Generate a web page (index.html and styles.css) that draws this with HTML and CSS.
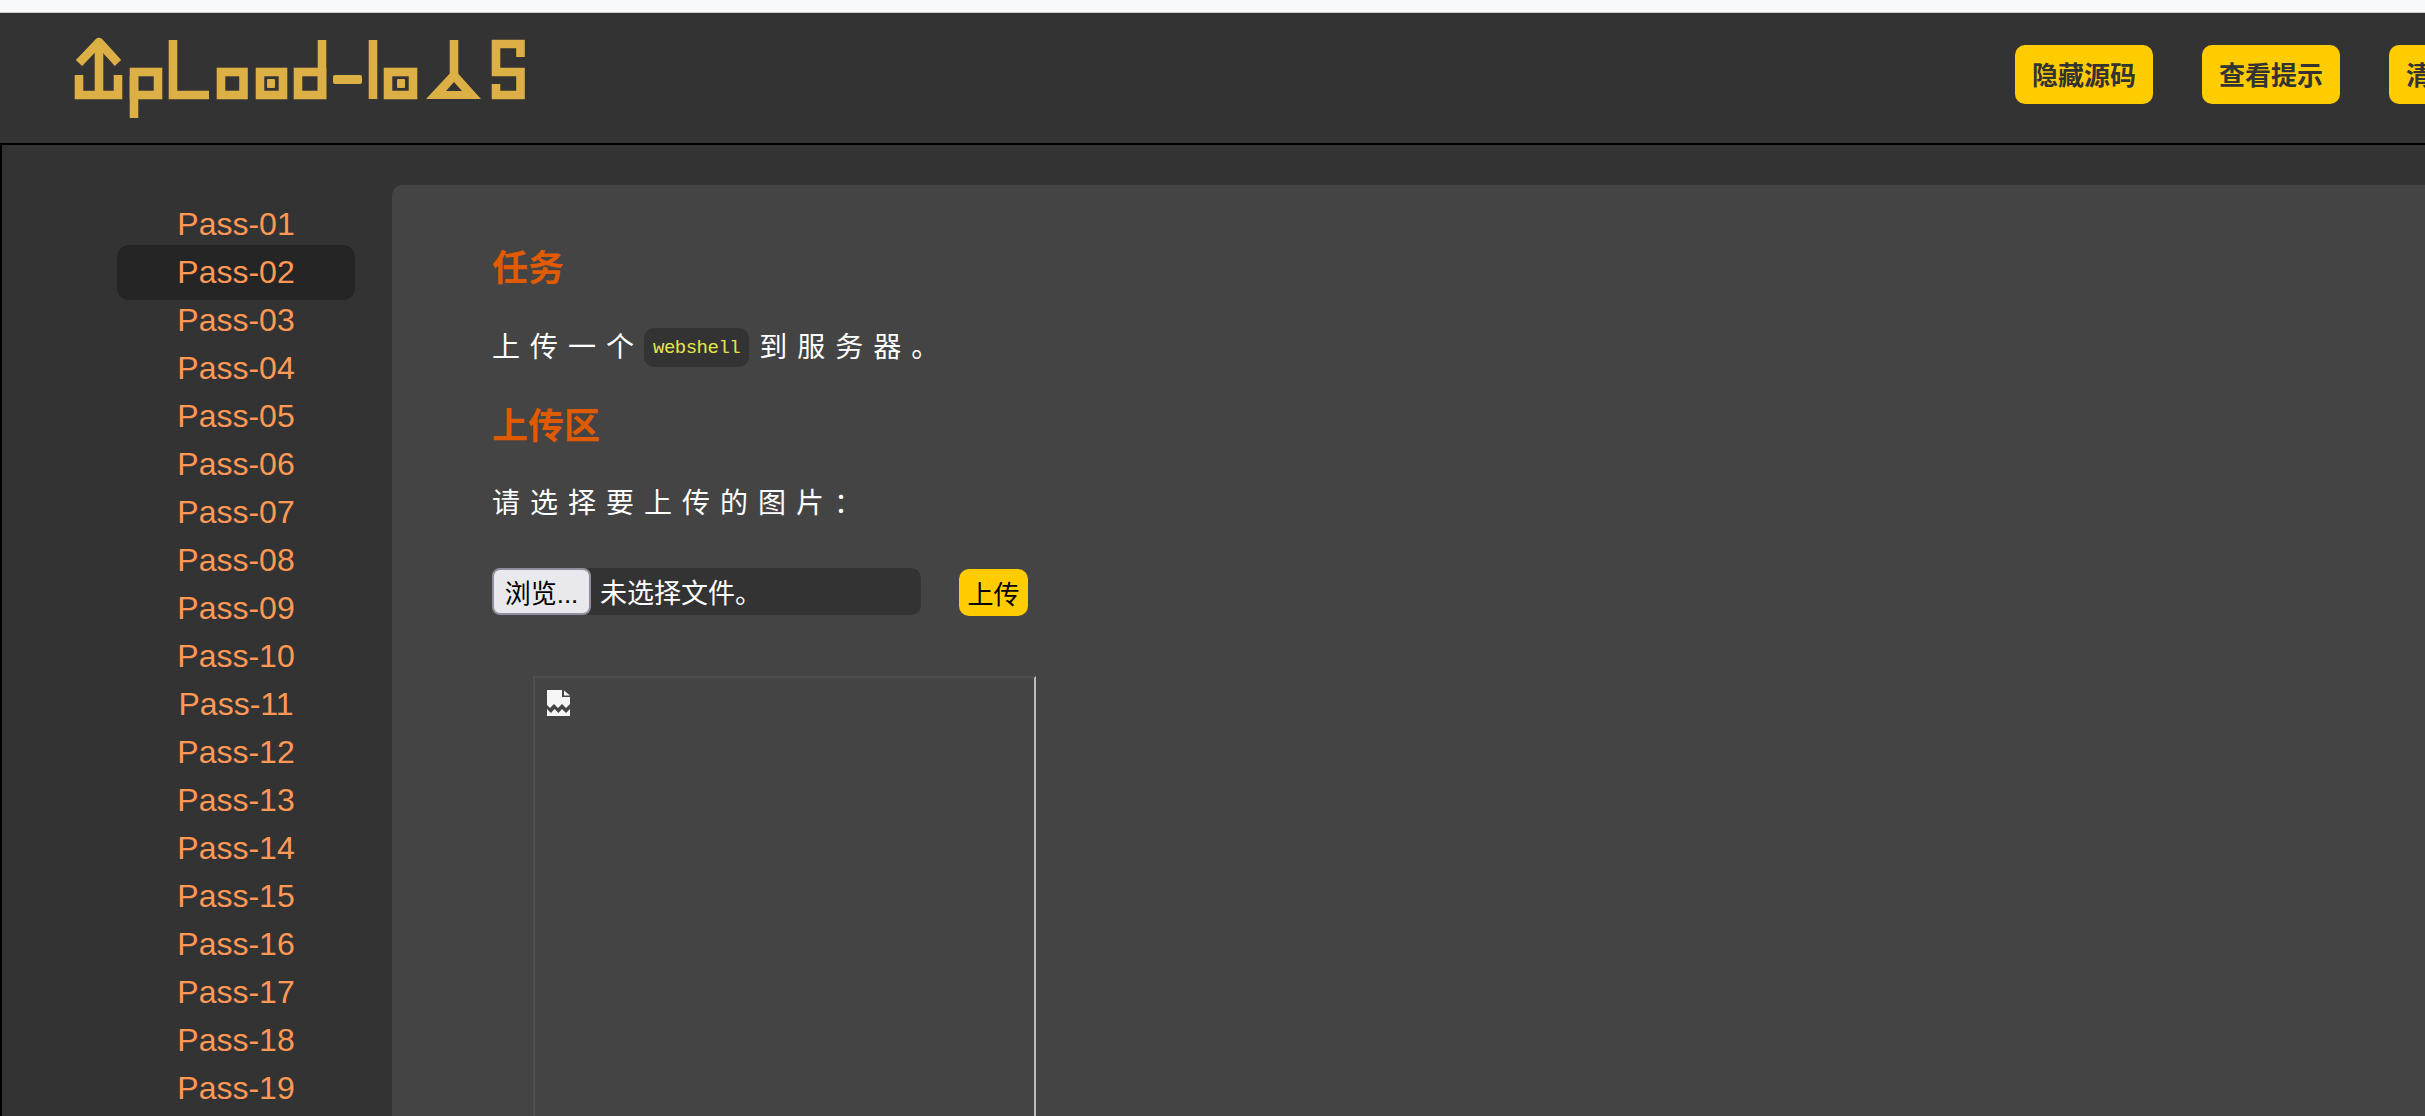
FILE: index.html
```html
<!DOCTYPE html>
<html>
<head>
  <meta charset="utf-8">
  <meta name="viewport" content="width=device-width, initial-scale=1">
  <title>upload-labs</title>
  <link rel="stylesheet" href="styles.css">
</head>
<body>
  <div class="topstrip"></div>
  <div class="header">
    <svg class="logo" width="460" height="90" viewBox="0 0 460 90" role="img" aria-label="upload-labs">
      <!-- arrow u -->
      <path class="logo-line" d="M9 39V59H48V39"/>
      <path class="logo-line" d="M29 5V59"/>
      <path class="logo-line logo-round" d="M9 27L29 6L48 27"/>
      <!-- p -->
      <rect class="logo-line" x="64" y="36" width="24" height="23"/>
      <path class="logo-line" d="M64 40V82"/>
      <!-- l -->
      <path class="logo-line" d="M103 4V59H139"/>
      <!-- o -->
      <rect class="logo-line" x="151" y="36" width="22.5" height="23"/>
      <!-- a -->
      <rect class="logo-line" x="190" y="36" width="23" height="23"/>
      <rect class="logo-fill" x="197" y="43" width="8" height="9" rx="1"/>
      <!-- d -->
      <rect class="logo-line" x="228" y="36" width="24" height="23"/>
      <path class="logo-line" d="M252 4V63"/>
      <!-- dash -->
      <rect class="logo-fill" x="263" y="39" width="29" height="9" rx="2"/>
      <!-- l -->
      <path class="logo-line" d="M303 4V63"/>
      <!-- a -->
      <rect class="logo-line" x="318" y="36" width="25" height="23"/>
      <rect class="logo-fill" x="327" y="43" width="8" height="9" rx="1"/>
      <!-- b -->
      <path class="logo-line" d="M384 4V45"/>
      <path class="logo-fill" fill-rule="evenodd" d="M384 33L411 63H356ZM384 46L376 55H392Z"/>
      <!-- s -->
      <path class="logo-line" d="M450.5 21V8H426V36H450.5V59H426V48"/>
    </svg>
    <div class="nav">
      <button class="nav-btn">隐藏源码</button>
      <button class="nav-btn">查看提示</button>
      <button class="nav-btn">清空上传文件</button>
    </div>
  </div>
  <div class="main">
    <ul class="menu">
      <li><a>Pass-01</a></li>
      <li><a class="active">Pass-02</a></li>
      <li><a>Pass-03</a></li>
      <li><a>Pass-04</a></li>
      <li><a>Pass-05</a></li>
      <li><a>Pass-06</a></li>
      <li><a>Pass-07</a></li>
      <li><a>Pass-08</a></li>
      <li><a>Pass-09</a></li>
      <li><a>Pass-10</a></li>
      <li><a>Pass-11</a></li>
      <li><a>Pass-12</a></li>
      <li><a>Pass-13</a></li>
      <li><a>Pass-14</a></li>
      <li><a>Pass-15</a></li>
      <li><a>Pass-16</a></li>
      <li><a>Pass-17</a></li>
      <li><a>Pass-18</a></li>
      <li><a>Pass-19</a></li>
    </ul>
    <div class="content">
      <h2>任务</h2>
      <p class="task">上传一个<code>webshell</code>到服务器。</p>
      <h2>上传区</h2>
      <p class="pick">请选择要上传的图片：</p>
      <div class="upload">
        <div class="file">
          <button class="file-btn">浏览...</button>
          <span class="file-name">未选择文件。</span>
        </div>
        <button class="submit">上传</button>
      </div>
      <div class="preview">
        <svg class="broken" width="25" height="28" viewBox="0 0 25 28">
          <path d="M1 1H16V8H24V15L20 19L16 15L12 19L8 15L4 19L1 16Z"/>
          <path d="M18 1.5L24 6.5H18Z"/>
          <path d="M1 27V20L5 24L8.5 20L12.5 24L16 20L20 24L24 20V27Z"/>
        </svg>
      </div>
    </div>
  </div>
</body>
</html>
```

FILE: styles.css
```css
* {
  margin: 0;
  padding: 0;
  box-sizing: border-box;
}

html, body {
  height: 100%;
  overflow: hidden;
}

body {
  display: flex;
  flex-direction: column;
  background: #333;
  color: #fff;
  font-family: "Liberation Sans", "Noto Sans CJK SC", sans-serif;
}

button {
  font-family: inherit;
  border: none;
}

.topstrip {
  flex: none;
  height: 13px;
  background: #f8f9fb;
  border-bottom: 1px solid #ccc;
}

/* header */
.header {
  flex: none;
  display: flex;
  align-items: flex-start;
  height: 132px;
  padding: 23px 0 0 70px;
  border-bottom: 2px solid #000;
}

.logo {
  flex: none;
  display: block;
}

.logo-line {
  fill: none;
  stroke: #dcb044;
  stroke-width: 8.6;
}

.logo-round {
  stroke-linejoin: round;
}

.logo-fill {
  fill: #dcb044;
}

.nav {
  flex: none;
  display: flex;
  gap: 49px;
  margin: 9px 0 0 1485px;
}

.nav-btn {
  flex: none;
  height: 59px;
  padding: 0 17px 3px;
  background: #fc0;
  color: #333;
  font-size: 26px;
  font-weight: bold;
  border-radius: 10px;
}

/* body */
.main {
  flex: 1;
  display: flex;
  min-height: 0;
  border-left: 2px solid #000;
  padding-top: 40px;
}

.menu {
  flex: none;
  width: 390px;
  padding: 15px 0 0 115px;
  list-style: none;
}

.menu li {
  display: flex;
  align-items: center;
  height: 48px;
}

.menu a {
  flex: none;
  width: 238px;
  height: 55px;
  line-height: 55px;
  text-align: center;
  font-size: 32px;
  color: #f95;
  border-radius: 12px;
}

.menu a.active {
  background: #252525;
}

.content {
  flex: 1;
  display: flex;
  flex-direction: column;
  padding: 59px 0 0 100px;
  background: #444;
  border-top-left-radius: 10px;
}

h2 {
  height: 50px;
  line-height: 50px;
  font-size: 36px;
  color: #e05a00;
}

.task, .pick {
  height: 40px;
  line-height: 40px;
  font-size: 28px;
  letter-spacing: 10px;
}

.task {
  margin: 34px 0;
}

.pick {
  margin: 32px 0 44px;
}

code {
  display: inline-block;
  height: 39px;
  line-height: 41px;
  margin-right: 10px;
  padding: 0 9px;
  background: #333;
  color: #e6e64c;
  font-family: "Liberation Mono", monospace;
  font-size: 19px;
  letter-spacing: -0.5px;
  border-radius: 10px;
  vertical-align: top;
}

/* upload form */
.upload {
  display: flex;
  align-items: flex-start;
  gap: 38px;
  font-size: 26px;
}

.file {
  display: flex;
  align-items: center;
  width: 429px;
  height: 47px;
  background: #333;
  border-radius: 10px;
}

.file-btn {
  flex: none;
  width: 99px;
  height: 47px;
  background: #e9e9ed;
  color: #000;
  font-size: 26px;
  border: 2px solid #8f8f9d;
  border-radius: 8px;
}

.file-name {
  margin-left: 9px;
  font-size: 27px;
}

.submit {
  flex: none;
  width: 69px;
  height: 47px;
  margin-top: 1px;
  background: #fc0;
  color: #000;
  font-size: 26px;
  border-radius: 10px;
}

.preview {
  flex: 1;
  width: 503px;
  margin: 60px 0 0 41px;
  padding: 11px 0 0 11px;
  border: solid #4f4f4f;
  border-width: 2px 0 0 2px;
  border-right: 2px solid #bbb;
}

.broken {
  display: block;
  fill: #f6f6f6;
  filter: blur(0.4px);
}
```
